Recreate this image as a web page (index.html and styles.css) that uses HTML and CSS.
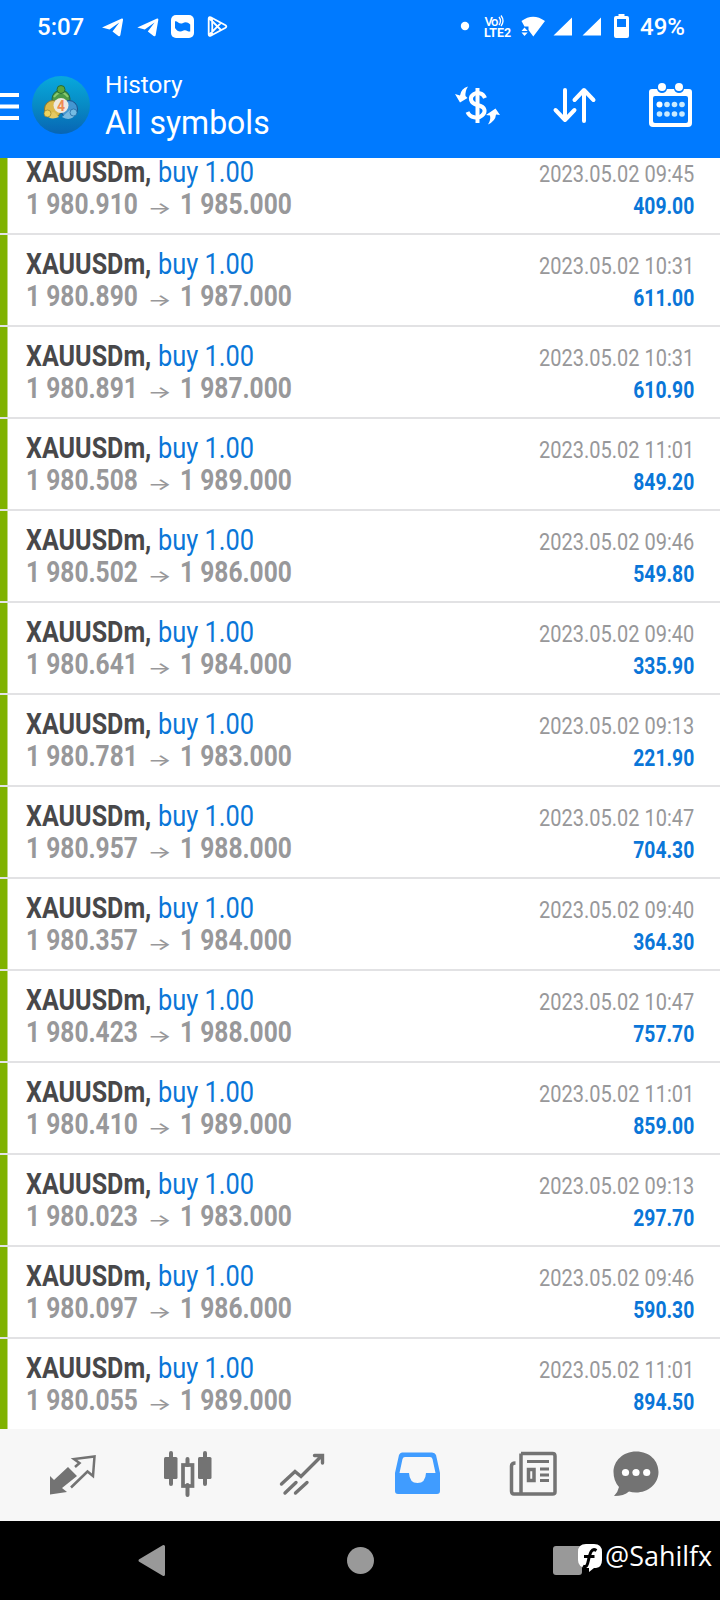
FILE: index.html
```
<!DOCTYPE html>
<html lang="en">
<head>
<meta charset="utf-8">
<title>History</title>
<link rel="stylesheet" href="styles.css">
</head>
<body>
<div class="screen">
  <header class="header">
    <div class="status">
      <span class="clock">5:07</span>
      <svg class="notifications" width="130" height="28" viewBox="100 13 130 28" fill="#fff">
        <path id="plane" d="M102 27.500 121.800 18.500Q123.300 18 123 20L120.400 35Q120 37 118.300 36L112.500 31.500 119.300 22.500 109.500 29.600Z"/>
        <use href="#plane" x="35.300"/>
        <rect x="171" y="15" width="23" height="23" rx="5"/>
        <path d="M175 21.300C178 21 179 24.500 182.500 23.300C185.500 21.800 187.500 22 190.200 24.500V31.600C187 31.500 186.500 29.500 183.500 30.500C180.500 32 177.500 32 175 28Z" fill="#007aff"/>
        <path d="M208.700 18.500Q208.900 16.500 210.700 17.300L225.500 25.300Q227.200 26.500 225.500 27.700L210.700 35.700Q208.900 36.500 208.700 34.500ZM209.500 18.500 221 30M209.500 34.500 221 22.800M212 18C212.500 26 212.500 28 212 35" fill="none" stroke="#fff" stroke-width="1.800"/>
      </svg>
      <svg class="signals" width="170" height="28" viewBox="460 13 170 28" fill="#fff">
        <circle cx="465" cy="26" r="4.200"/>
        <text class="vo" x="484.500" y="25.500" textLength="14">Vo</text>
        <path d="M499 17Q502 21 499 25M501 15.500Q505 21 501 26" fill="none" stroke="#fff" stroke-width="1.300"/>
        <text class="lte" x="484" y="36.500" textLength="27" lengthAdjust="spacingAndGlyphs">LTE2</text>
        <path d="M521.500 21Q533 12.500 545 21L533.300 36.500 528.500 30V26.500H524.500Z"/>
        <path d="M521.500 31 524.500 27.500 527.700 31ZM521.500 32.500 524.500 36 527.700 32.500Z"/>
        <path d="M553.500 35.500 572 17.500V35.500ZM582.500 35.500 601 17.500V35.500Z"/>
        <path fill-rule="evenodd" d="M618.500 14H624.500V16H627Q629 16 629 18V36Q629 38 627 38H616Q614 38 614 36V18Q614 16 616 16H618.500ZM617 19V27H626V19Z"/>
      </svg>
      <span class="battery">49%</span>
    </div>
    <div class="toolbar">
      <svg class="menu" width="19" height="27" viewBox="0 0 19 27" fill="#fff"><path d="M0 0H19V4H0ZM0 11.500H19V15.500H0ZM0 23H19V27H0Z"/></svg>
      <svg class="logo" width="58" height="60" viewBox="0 0 58 60">
        <defs><linearGradient id="sky" x2="0" y2="1"><stop stop-color="#08a9dd"/><stop offset=".5" stop-color="#078bc5"/><stop offset="1" stop-color="#0865b4"/></linearGradient></defs>
        <circle cx="29" cy="30" r="29" fill="url(#sky)"/>
        <circle cx="29" cy="24" r="9" fill="#4c9a48" stroke="#25683c"/>
        <path d="M22 22Q29 13 36 22" fill="none" stroke="#8ccb70" stroke-width="2"/>
        <circle cx="29" cy="14.500" r="4" fill="#5ca53c" stroke="#246c38"/>
        <circle cx="21" cy="34" r="8.500" fill="#dbb94b" stroke="#87772e"/>
        <path d="M13 39Q18 46 27 42L22 37Z" fill="#e6c962"/>
        <circle cx="15.500" cy="38.500" r="3.500" fill="#f0d35e" stroke="#92802e" stroke-width=".7"/>
        <circle cx="37" cy="34" r="8.500" fill="#4496d1" stroke="#1a528d"/>
        <path d="M30 42Q39 47 44 39L38 35Z" fill="#79b9df"/>
        <circle cx="41.500" cy="37.500" r="3.500" fill="#75bce3" stroke="#1a629d" stroke-width=".7"/>
        <circle cx="29" cy="30.500" r="7.500" fill="#eee8df"/>
        <text class="four" x="29" y="35.500" text-anchor="middle">4</text>
      </svg>
      <div class="titles"><div class="title">History</div><div class="subtitle">All symbols</div></div>
      <svg class="tools" width="240" height="46" viewBox="453 81 240 46" fill="none" stroke="#fff">
        <path d="M477.500 88V123" stroke-width="4"/>
        <path d="M485 98C483 93 478 92 474 94C469 97 470 103 477.500 105C486 107 486 112 482 115.500C478 119 470 118 467.500 112" stroke-width="4"/>
        <path d="M455 94 460 95.500Q461 88.500 468 86.500Q465 91 465.500 96L467.500 98 460 102.500ZM500 115 496 114.500Q495.500 121 488 124.500Q491 120 490 115.500L486 115 495.500 108.500Z" fill="#fff" stroke="none"/>
        <path d="M565 90V120M555.500 110 565 120 574.500 110M584 121V91M574.500 100 584 90 593.500 100" stroke-width="4" stroke-linecap="round" stroke-linejoin="round"/>
        <path fill="#fff" stroke="none" fill-rule="evenodd" d="M652 89H657Q658 93 662 93Q666 93 667 89H674Q675 93 679 93Q683 93 684 89H689Q692 89 692 92V123Q692 127 688 127H653Q649 127 649 123V92Q649 89 652 89ZM655 96Q653 96 653 98V121Q653 123 655 123H686Q688 123 688 121V98Q688 96 686 96Z"/>
        <g fill="#fff" stroke="none"><circle cx="662" cy="87" r="4"/><circle cx="679" cy="87" r="4"/><circle cx="659.500" cy="104.500" r="3"/></g>
        <g fill="#c9eaff" stroke="none"><circle cx="667" cy="104.500" r="2.800"/><circle cx="674.500" cy="104.500" r="2.800"/><circle cx="682" cy="104.500" r="2.800"/><circle cx="659.500" cy="114" r="2.800"/><circle cx="667" cy="114" r="2.800"/><circle cx="674.500" cy="114" r="2.800"/><circle cx="682" cy="114" r="2.800"/></g>
      </svg>
    </div>
  </header>
  <main class="list"><div class="rows" id="rows"></div></main>
  <nav class="tabs">
    <svg width="720" height="92" viewBox="0 1429 720 92" fill="none" stroke="#737373">
      <path d="M50 1476 54 1480 68 1467 77 1476 62 1488 67 1492 50 1494.500Z" fill="#737373" stroke="none"/>
      <path d="M75 1467 79.500 1463 74 1459 94.500 1456.500 93 1476 87.500 1471.500 71 1487.500" stroke-width="2.500"/>
      <path d="M171 1453V1484M205 1453V1484M187.500 1459V1465M187.500 1485V1495" stroke-width="4" stroke-linecap="round"/>
      <rect x="164" y="1457" width="13.500" height="22" rx="1.500" fill="#737373" stroke="none"/><rect x="198" y="1457" width="13.500" height="22" rx="1.500" fill="#737373" stroke="none"/>
      <rect x="183" y="1465" width="9.500" height="21" stroke-width="3.700"/>
      <path d="M281.500 1484 295 1471.500 301 1476.500 322 1455.500M314.500 1455.500H322.500V1463M285 1493 296 1482.500M295.500 1493 307 1482.500" stroke-width="3.400" stroke-linecap="round"/>
      <path d="M402 1452.500H432Q435 1452.500 436 1455L440 1473V1491Q440 1494 437 1494H398Q395 1494 395 1491V1473L399 1455Q400 1452.500 402 1452.500ZM405 1457Q403 1457 402.500 1459L399.500 1473H409Q409.500 1483 417.500 1483Q425.500 1483 426 1473H435.500L432.500 1459Q432 1457 430 1457Z" fill="#409cff" fill-rule="evenodd" stroke="none"/>
      <path d="M521 1453.500H552.500Q555 1453.500 555 1456V1492Q555 1494 552.500 1494H514Q511.500 1494 511.500 1491V1466Q511.500 1463 515.500 1463M521 1453.500V1494" stroke-width="3.500"/>
      <path d="M527 1461.500H549M540 1469H549M540 1475H549M540 1480.500H549" stroke-width="3.200"/><rect x="528.500" y="1469.500" width="5.500" height="11" stroke-width="3.500"/>
      <path d="M636 1451.500C650 1451.500 658.500 1461 658.500 1472C658.500 1484 648 1492.500 636 1492.500Q632 1492.500 629 1491.500Q624 1496 614 1496Q618 1492 619 1487Q613.500 1481 613.500 1472C613.500 1461 623 1451.500 636 1451.500Z" fill="#737373" stroke="none"/>
      <g fill="#fff" stroke="none"><circle cx="625.500" cy="1472.500" r="3.600"/><circle cx="636" cy="1472.500" r="3.600"/><circle cx="646.700" cy="1472.500" r="3.600"/></g>
    </svg>
  </nav>
  <footer class="system">
    <svg class="buttons" width="605" height="79" viewBox="0 1521 605 79">
      <path d="M140 1560.500 163.500 1546.500V1574.500Z" fill="#999" stroke="#999" stroke-width="3" stroke-linejoin="round"/>
      <circle cx="360.500" cy="1560.500" r="13.500" fill="#999"/><rect x="553" y="1546" width="29" height="29" rx="3" fill="#999"/>
      <path d="M586 1544H594Q602 1544 602 1552V1560Q602 1567 596 1568H594L589 1572V1568H586Q578 1567 578 1560V1552Q578 1544 586 1544Z" fill="#fff"/>
      <path d="M596.500 1550.500C591.500 1547.500 590 1553 588.500 1560C587.500 1565 586.500 1568 583 1566M584 1556.500H594.500" stroke="#000" stroke-width="3" fill="none"/>
    </svg>
    <span class="handle">@Sahilfx</span>
  </footer>
</div>
<script src="rows.js"></script>
</body>
</html>
```
FILE: styles.css
```
* { box-sizing: border-box; }
body { margin: 0; background: #000; font-family: Roboto, sans-serif; }
.screen { width: 720px; height: 1600px; display: flex; flex-direction: column; overflow: hidden; }
svg { display: block; flex: none; }
.header { height: 158px; flex: none; background: #007aff; color: #fff; }
.status { height: 54px; padding: 0 0 0 37px; display: flex; align-items: center; font-size: 24px; font-weight: 500; line-height: 54px; }
.clock { width: 63px; }
.signals { margin-left: 230px; }
.battery { margin-left: 10px; white-space: nowrap; }
.vo { font: 500 13px Roboto; }
.lte { font: 700 12px Roboto; }
.four { font: 700 14px Roboto; fill: #ef8b51; }
.toolbar { height: 104px; display: flex; align-items: flex-start; }
.menu { margin-top: 39px; }
.logo { margin: 21px 0 0 13px; }
.titles { width: 362px; padding: 16px 0 0 15px; }
.title { font-size: 24px; line-height: 30px; transform: scaleX(1.015); transform-origin: left; }
.subtitle { font-size: 33px; line-height: 46px; transform: scaleX(.97); transform-origin: left; }
.tools { margin: 27px 0 0 1px; }
.list { height: 1271px; flex: none; overflow: hidden; background: #fff; }
.rows { margin-top: -15px; }
.row { height: 92px; border-bottom: 2px solid #e2e2e4; display: flex; justify-content: space-between; padding: 12px 26px 0 26px; background: linear-gradient(#7fb200, #7fb200) left / 7.5px 100% no-repeat; background-clip: padding-box; }
.line { display: flex; height: 32px; line-height: 34px; font-size: 29px; white-space: nowrap; }
.line span { transform-origin: left; }
.symbol { width: 132px; font-weight: 700; color: #48484a; transform: scaleX(.865); }
.action { color: #0a76d8; transform: scaleX(.876); }
.price { width: 123px; font-weight: 700; color: #98989a; transform: scaleX(.847); }
.line .arrow { width: 31px; font: 500 17px/42px Inter, sans-serif; color: #98989a; transform: translateX(-1.5px) scaleX(1.5); }
.side { text-align: right; font-size: 24px; white-space: nowrap; }
.side div { height: 32px; line-height: 38px; transform-origin: right; }
.side .time { color: #98989a; transform: scaleX(.833); }
.side .profit { font-weight: 700; color: #0a76d8; transform: scaleX(.805); }
.tabs { height: 92px; flex: none; background: #f7f7f7; }
.system { height: 79px; flex: none; display: flex; background: #000; }
.handle { color: #fff; font: 400 27.500px/69px "Open Sans", sans-serif; transform: scaleX(.98); transform-origin: left; }
```
FILE: rows.js
```
const deals = [
  ['910', '985', '09:45', '409.00'], ['890', '987', '10:31', '611.00'],
  ['891', '987', '10:31', '610.90'], ['508', '989', '11:01', '849.20'],
  ['502', '986', '09:46', '549.80'], ['641', '984', '09:40', '335.90'],
  ['781', '983', '09:13', '221.90'], ['957', '988', '10:47', '704.30'],
  ['357', '984', '09:40', '364.30'], ['423', '988', '10:47', '757.70'],
  ['410', '989', '11:01', '859.00'], ['023', '983', '09:13', '297.70'],
  ['097', '986', '09:46', '590.30'], ['055', '989', '11:01', '894.50']
];
document.getElementById('rows').innerHTML = deals.map(([open, close, time, profit]) => `
  <article class="row">
    <div class="deal">
      <div class="line"><span class="symbol">XAUUSDm,</span><span class="action">buy 1.00</span></div>
      <div class="line"><span class="price">1 980.${open}</span><span class="arrow">→</span><span class="price">1 ${close}.000</span></div>
    </div>
    <div class="side"><div class="time">2023.05.02 ${time}</div><div class="profit">${profit}</div></div>
  </article>`).join('');
```
